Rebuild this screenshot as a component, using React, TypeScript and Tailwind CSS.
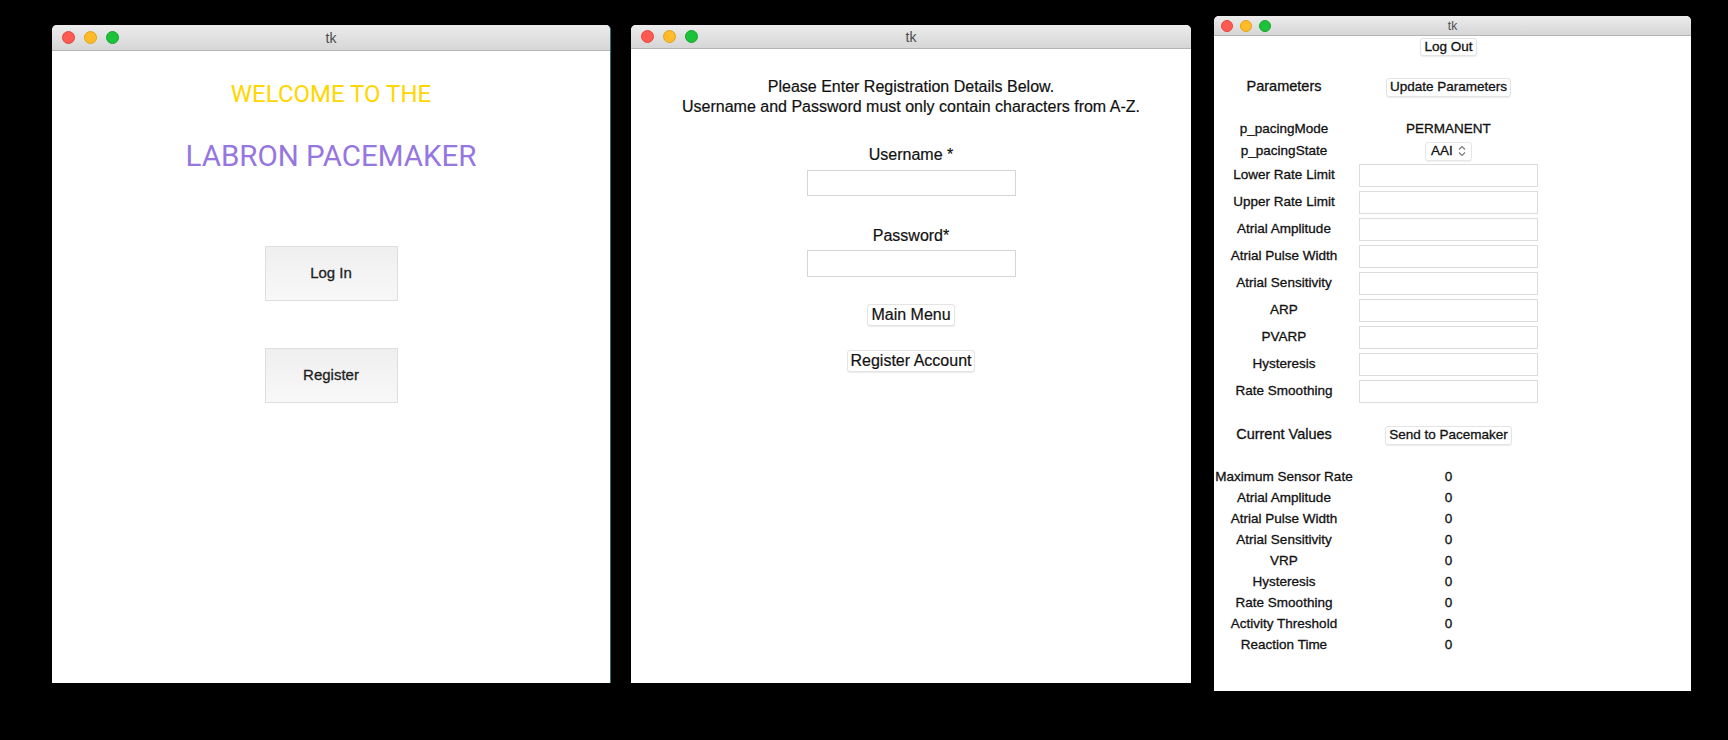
import clsx from "clsx";
import type { ReactNode } from "react";

const SANS = "font-['Liberation_Sans',Arial,sans-serif]";
// retina screenshot text reads a bit heavier than plain regular
const HEAVY = "[-webkit-text-stroke:0.3px]";

const PARAMETER_FIELDS = [
  "Lower Rate Limit",
  "Upper Rate Limit",
  "Atrial Amplitude",
  "Atrial Pulse Width",
  "Atrial Sensitivity",
  "ARP",
  "PVARP",
  "Hysteresis",
  "Rate Smoothing",
];

const CURRENT_VALUES = [
  "Maximum Sensor Rate",
  "Atrial Amplitude",
  "Atrial Pulse Width",
  "Atrial Sensitivity",
  "VRP",
  "Hysteresis",
  "Rate Smoothing",
  "Activity Threshold",
  "Reaction Time",
];

export default function App() {
  return (
    <div className={clsx("flex min-h-[740px] w-[1728px] items-start bg-black pl-[52px]", SANS)}>
      <WelcomeWindow />
      <RegisterWindow />
      <ParametersWindow />
    </div>
  );
}

function TrafficLights({ small }: { small?: boolean }) {
  const dot = small ? "size-[12px]" : "size-[13px]";
  return (
    <div className={clsx("flex items-center", small ? "gap-[7px] pl-[7px]" : "gap-[9px] pl-[10px]")}>
      <span className={clsx(dot, "rounded-full border border-[#e2463f] bg-[#ff5a52]")} />
      <span className={clsx(dot, "rounded-full border border-[#e1a116] bg-[#ffbb2a]")} />
      <span className={clsx(dot, "rounded-full border border-[#14a52c] bg-[#1cc23a]")} />
    </div>
  );
}

function Window({
  className,
  barHeight,
  titleTop,
  small,
  children,
}: {
  className: string;
  barHeight: string;
  titleTop: string;
  small?: boolean;
  children: ReactNode;
}) {
  return (
    <div className={clsx("relative flex flex-col overflow-hidden rounded-t-[5px] bg-white", className)}>
      <div
        className={clsx(
          "relative flex shrink-0 items-center border-b border-[#b4b4b4] bg-gradient-to-b from-[#ececec] to-[#d6d6d6]",
          barHeight
        )}
      >
        <TrafficLights small={small} />
        <span
          className={clsx(
            "absolute inset-x-0 text-center leading-none text-[#4d4d4d]",
            small ? "text-[12px]" : "text-[14px]",
            titleTop
          )}
        >
          tk
        </span>
      </div>
      <div className="flex flex-1 flex-col">{children}</div>
    </div>
  );
}

function WelcomeWindow() {
  return (
    <Window
      className="mt-[25px] h-[658px] w-[559px] border-r border-[#2f6e6e]"
      barHeight="h-[26px]"
      titleTop="top-[6px]"
    >
      <div className="flex flex-col items-center font-['Roboto',sans-serif]">
        <p className="mt-[29px] text-[24px] leading-[28px] text-[#ffd600]">WELCOME TO THE</p>
        <p className="mt-[31px] text-[29.5px] leading-[34px] text-[#9676e0]">LABRON PACEMAKER</p>
      </div>
      <div className="flex flex-col items-center">
        <BigButton className="mt-[73px]">Log In</BigButton>
        <BigButton className="mt-[47px]">Register</BigButton>
      </div>
    </Window>
  );
}

function BigButton({ className, children }: { className: string; children: ReactNode }) {
  return (
    <button
      className={clsx(
        "flex h-[55px] w-[133px] items-center justify-center border border-[#dedede] bg-gradient-to-b from-[#efefef] to-[#f8f8f8] text-[15px] text-[#1e1e1e]",
        HEAVY,
        className
      )}
    >
      {children}
    </button>
  );
}

function MacButton({ className, children }: { className?: string; children: ReactNode }) {
  return (
    <button
      className={clsx(
        "rounded-[3px] border border-[#e4e4e4] bg-white px-[3px] leading-tight text-[#111] shadow-[0_1px_1px_rgba(0,0,0,0.08)]",
        className
      )}
    >
      {children}
    </button>
  );
}

function RegisterWindow() {
  return (
    <Window className="ml-[20px] mt-[25px] h-[658px] w-[560px]" barHeight="h-[24px]" titleTop="top-[5px]">
      <div className={clsx("flex flex-col items-center text-[16px] text-[#111]", "[-webkit-text-stroke:0.2px]")}>
        <p className="mt-[28px] text-center leading-[20px]">
          Please Enter Registration Details Below.
          <br />
          Username and Password must only contain characters from A-Z.
        </p>
        <p className="mt-[28px] leading-[20px]">Username *</p>
        <input className="mt-[5px] h-[26px] w-[209px] border border-[#d6d6d6] bg-white outline-none" />
        <p className="mt-[30px] leading-[20px]">Password*</p>
        <input
          type="password"
          className="mt-[4px] h-[27px] w-[209px] border border-[#d6d6d6] bg-white outline-none"
        />
        <MacButton className="mt-[27px] h-[22px] text-[16px]">Main Menu</MacButton>
        <MacButton className="mt-[24px] h-[22px] text-[16px]">Register Account</MacButton>
      </div>
    </Window>
  );
}

function Row({ height, className, children }: { height: string; className?: string; children: ReactNode }) {
  return (
    <div className={clsx("grid grid-cols-[140px_179px] items-center gap-x-[5px]", height, className)}>
      {children}
    </div>
  );
}

function ParametersWindow() {
  return (
    <Window
      className="ml-[23px] mt-[16px] h-[675px] w-[477px]"
      barHeight="h-[20px]"
      titleTop="top-[4px]"
      small
    >
      <div className={clsx("flex flex-col pt-[1px] text-[13.5px] text-[#111]", HEAVY)}>
        <Row height="h-[20px]">
          <span />
          <div className="flex justify-center">
            <MacButton className="h-[18px] text-[13.5px]">Log Out</MacButton>
          </div>
        </Row>

        <Row height="h-[24px]" className="mt-[18px]">
          <span className="text-center text-[14.5px]">Parameters</span>
          <div className="flex justify-center">
            <MacButton className="h-[19px] text-[13.5px]">Update Parameters</MacButton>
          </div>
        </Row>

        <Row height="h-[22px]" className="mt-[19px]">
          <span className="text-center">p_pacingMode</span>
          <span className="text-center">PERMANENT</span>
        </Row>
        <Row height="h-[22px]">
          <span className="text-center">p_pacingState</span>
          <div className="flex justify-center">
            <div className="flex h-[19px] items-center gap-[5px] rounded-[3px] border border-[#e6e6e6] bg-white px-[5px] shadow-[0_1px_1px_rgba(0,0,0,0.06)]">
              <span>AAI</span>
              <svg width="8" height="12" viewBox="0 0 8 12" fill="none" stroke="#7a7a7a" strokeWidth="1.2">
                <path d="M1 4.5 4 1.5 7 4.5" />
                <path d="M1 7.5 4 10.5 7 7.5" />
              </svg>
            </div>
          </div>
        </Row>

        {PARAMETER_FIELDS.map((label) => (
          <Row key={label} height="h-[27px]">
            <span className="text-center">{label}</span>
            <input className="h-[23px] w-[179px] border border-[#dcdcdc] bg-white outline-none" />
          </Row>
        ))}

        <Row height="h-[24px]" className="mt-[18px]">
          <span className="text-center text-[14.5px]">Current Values</span>
          <div className="flex justify-center">
            <MacButton className="h-[19px] text-[13.5px]">Send to Pacemaker</MacButton>
          </div>
        </Row>

        <div className="mt-[20px] flex flex-col">
          {CURRENT_VALUES.map((label) => (
            <Row key={label} height="h-[21px]">
              <span className="whitespace-nowrap text-center">{label}</span>
              <span className="text-center">0</span>
            </Row>
          ))}
        </div>
      </div>
    </Window>
  );
}
